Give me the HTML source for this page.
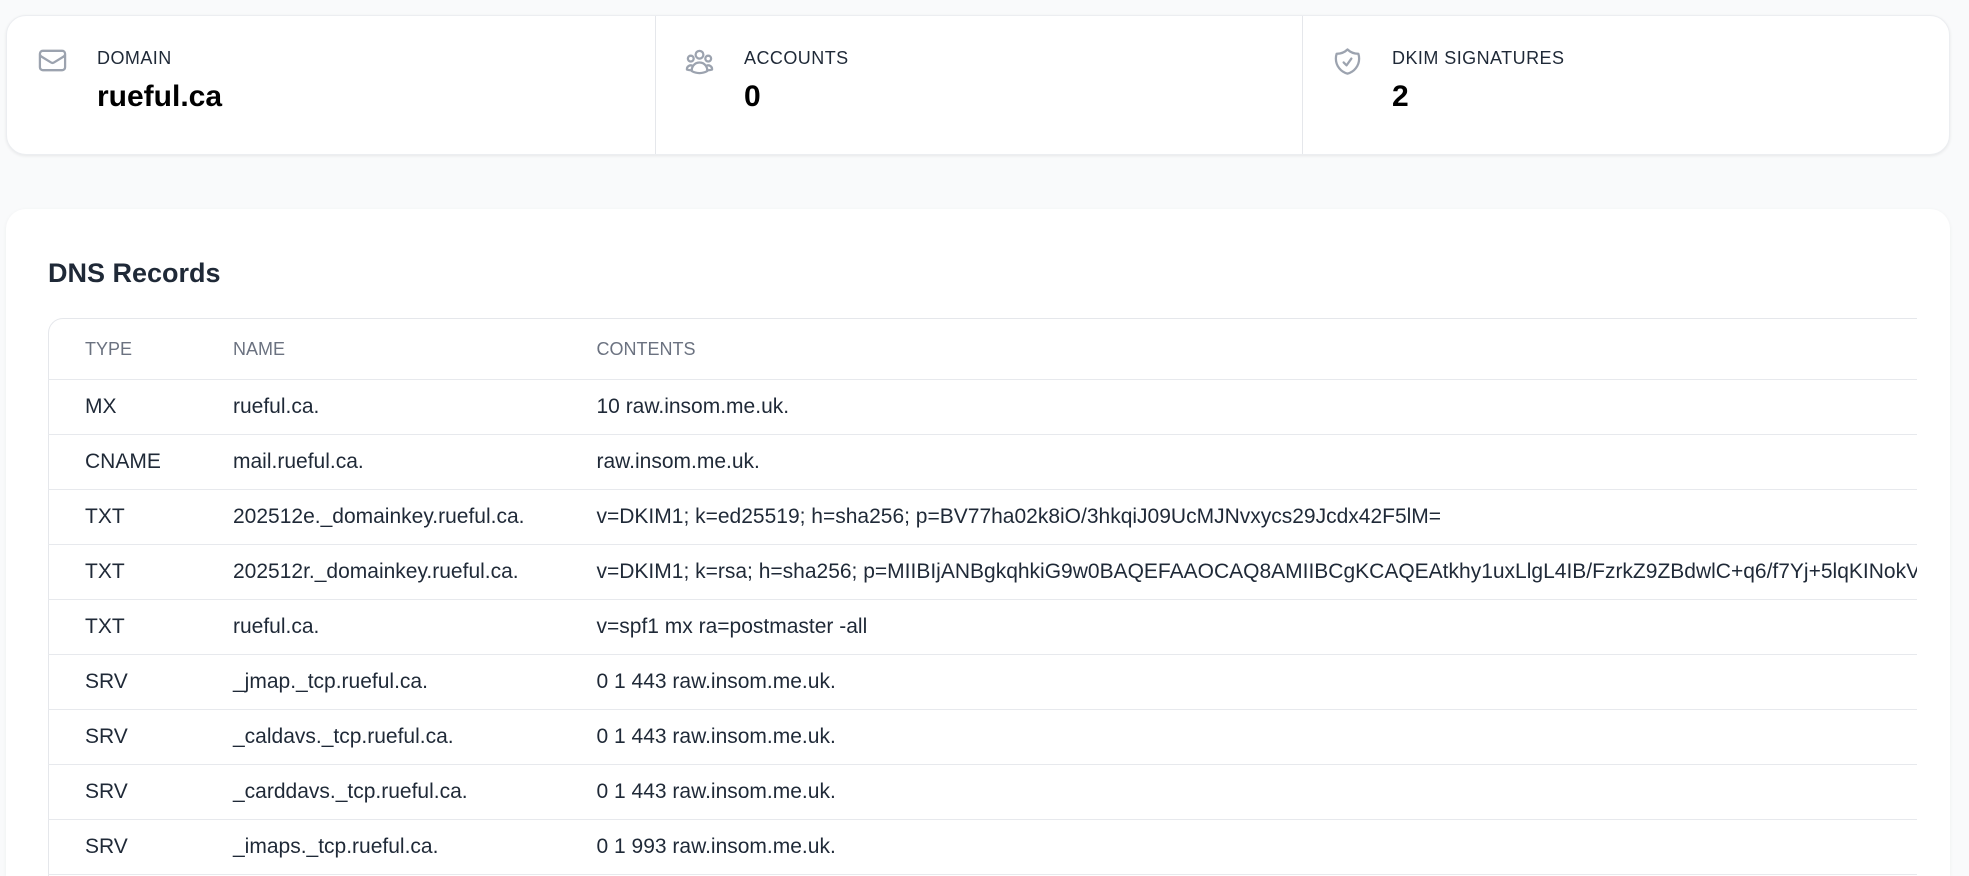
<!DOCTYPE html>
<html lang="en">
<head>
<meta charset="utf-8">
<title>rueful.ca</title>
<style>
html,body{margin:0;padding:0;width:1969px;height:876px;overflow:hidden;background:#f9fafb;font-family:"Liberation Sans",sans-serif;color:#1f2937}
*{box-sizing:border-box}
#root{position:relative;width:1969px;height:876px;overflow:hidden;background:#f9fafb}
.stats{position:absolute;left:6px;top:15px;width:1944px;height:140px;background:#fff;border-radius:20px;border:1px solid #eceef1;box-shadow:0 1px 3px rgba(0,0,0,.08)}
.div{position:absolute;top:16px;height:138px;background:#e5e7eb}
.label{position:absolute;top:46px;font-size:18px;line-height:24px;color:#1f2937;letter-spacing:.45px;white-space:nowrap}
.value{position:absolute;top:78px;font-size:30px;line-height:38px;font-weight:700;color:#000;white-space:nowrap}
svg.ic{position:absolute;width:31px;height:31px;top:45px;fill:none;stroke:#9ca3af;stroke-width:1.75;stroke-linecap:round;stroke-linejoin:round}
.panel{position:absolute;left:6px;top:209px;width:1944px;height:667px;background:#fff;border-radius:20px 20px 0 0;box-shadow:0 1px 4px rgba(0,0,0,.05)}
h2{position:absolute;left:48px;top:256px;margin:0;font-size:27px;line-height:34px;font-weight:700;color:#1f2937;white-space:nowrap}
.clip{position:absolute;left:48px;top:318px;width:1869px;height:558px;overflow:hidden}
.tbl{position:absolute;left:0;top:0;width:2600px;height:600px;border:1px solid #e5e7eb;border-radius:15px}
.row{position:absolute;left:-1px;width:2600px;height:55px;border-bottom:1px solid #e7e9ed}
.row span{position:absolute;top:0;line-height:54px;font-size:21px;white-space:nowrap;color:#1f2937}
.row .a{left:37px}.row .b{left:185px}.row .c{left:548.5px}
.head span{font-size:18px;color:#6b7280;top:-3px}
</style>
</head>
<body>
<div id="root">
<div class="stats"></div>
<div class="div" style="left:654.5px;width:1.5px"></div>
<div class="div" style="left:1302px;width:1px"></div>

<svg class="ic" style="left:36.5px" viewBox="0 0 24 24"><path d="M21.75 6.75v10.5a2.25 2.25 0 0 1-2.25 2.25h-15a2.25 2.25 0 0 1-2.25-2.25V6.75m19.5 0A2.25 2.25 0 0 0 19.5 4.5h-15a2.25 2.25 0 0 0-2.25 2.25m19.5 0v.243a2.25 2.25 0 0 1-1.07 1.916l-7.5 4.615a2.25 2.25 0 0 1-2.36 0L3.32 8.91a2.25 2.25 0 0 1-1.07-1.916V6.75"/></svg>
<div class="label" style="left:97px">DOMAIN</div>
<div class="value" style="left:97px">rueful.ca</div>

<svg class="ic" style="left:684px;top:45.5px" viewBox="0 0 24 24"><path d="M18 18.72a9.094 9.094 0 0 0 3.741-.479 3 3 0 0 0-4.682-2.72m.94 3.198.001.031c0 .225-.012.447-.037.666A11.944 11.944 0 0 1 12 21c-2.17 0-4.207-.576-5.963-1.584A6.062 6.062 0 0 1 6 18.719m12 0a5.971 5.971 0 0 0-.941-3.197m0 0A5.995 5.995 0 0 0 12 12.75a5.995 5.995 0 0 0-5.058 2.772m0 0a3 3 0 0 0-4.681 2.72 8.986 8.986 0 0 0 3.74.477m.94-3.197a5.971 5.971 0 0 0-.94 3.197M15 6.75a3 3 0 1 1-6 0 3 3 0 0 1 6 0Zm6 3a2.25 2.25 0 1 1-4.5 0 2.25 2.25 0 0 1 4.5 0Zm-13.5 0a2.25 2.25 0 1 1-4.5 0 2.25 2.25 0 0 1 4.5 0Z"/></svg>
<div class="label" style="left:744px">ACCOUNTS</div>
<div class="value" style="left:744px">0</div>

<svg class="ic" style="left:1332px;top:45.5px" viewBox="0 0 24 24"><path d="M9 12.75 11.25 15 15 9.75m-3-7.036A11.959 11.959 0 0 1 3.598 6 11.99 11.99 0 0 0 3 9.749c0 5.592 3.824 10.29 9 11.623 5.176-1.332 9-6.03 9-11.622 0-1.31-.21-2.571-.598-3.751h-.152c-3.196 0-6.1-1.248-8.25-3.286Z"/></svg>
<div class="label" style="left:1392px">DKIM SIGNATURES</div>
<div class="value" style="left:1392px">2</div>

<div class="panel"></div>
<h2>DNS Records</h2>

<div class="clip">
  <div class="tbl">
    <div class="row head" style="top:6px"><span class="a">TYPE</span><span class="b">NAME</span><span class="c">CONTENTS</span></div>
    <div class="row" style="top:61px"><span class="a">MX</span><span class="b">rueful.ca.</span><span class="c">10 raw.insom.me.uk.</span></div>
    <div class="row" style="top:116px"><span class="a">CNAME</span><span class="b">mail.rueful.ca.</span><span class="c">raw.insom.me.uk.</span></div>
    <div class="row" style="top:171px"><span class="a">TXT</span><span class="b">202512e._domainkey.rueful.ca.</span><span class="c">v=DKIM1; k=ed25519; h=sha256; p=BV77ha02k8iO/3hkqiJ09UcMJNvxycs29Jcdx42F5lM=</span></div>
    <div class="row" style="top:226px"><span class="a">TXT</span><span class="b">202512r._domainkey.rueful.ca.</span><span class="c">v=DKIM1; k=rsa; h=sha256; p=MIIBIjANBgkqhkiG9w0BAQEFAAOCAQ8AMIIBCgKCAQEAtkhy1uxLlgL4IB/FzrkZ9ZBdwlC+q6/f7Yj+5lqKINokVxQ</span></div>
    <div class="row" style="top:281px"><span class="a">TXT</span><span class="b">rueful.ca.</span><span class="c">v=spf1 mx ra=postmaster -all</span></div>
    <div class="row" style="top:336px"><span class="a">SRV</span><span class="b">_jmap._tcp.rueful.ca.</span><span class="c">0 1 443 raw.insom.me.uk.</span></div>
    <div class="row" style="top:391px"><span class="a">SRV</span><span class="b">_caldavs._tcp.rueful.ca.</span><span class="c">0 1 443 raw.insom.me.uk.</span></div>
    <div class="row" style="top:446px"><span class="a">SRV</span><span class="b">_carddavs._tcp.rueful.ca.</span><span class="c">0 1 443 raw.insom.me.uk.</span></div>
    <div class="row" style="top:501px"><span class="a">SRV</span><span class="b">_imaps._tcp.rueful.ca.</span><span class="c">0 1 993 raw.insom.me.uk.</span></div>
  </div>
</div>
</div>
</body>
</html>
